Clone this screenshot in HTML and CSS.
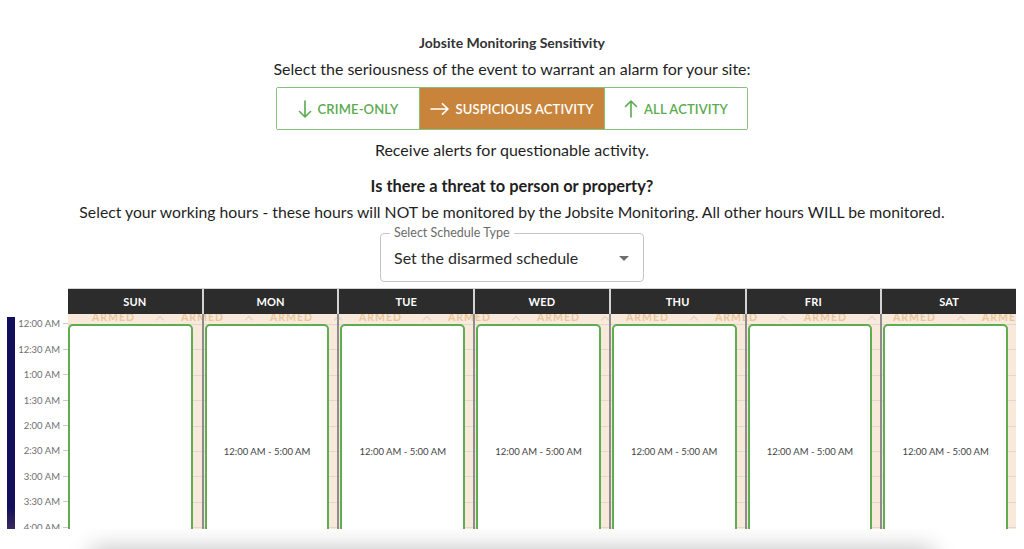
FILE: index.html
```html
<!DOCTYPE html>
<html lang="en">
<head>
<meta charset="utf-8">
<title>Jobsite Monitoring</title>
<link rel="stylesheet" href="styles.css">
</head>
<body>
<div class="page">
  <section class="sens">
    <h2 class="title">Jobsite Monitoring Sensitivity</h2>
    <p class="prompt">Select the seriousness of the event to warrant an alarm for your site:</p>
    <div class="seg">
      <button class="seg-btn seg-side">
        <svg class="ico" width="14" height="18" viewBox="0 0 14 18"><path d="M7 1V17M1.5 11.5L7 17L12.5 11.5" fill="none" stroke="currentColor" stroke-width="1.6" stroke-linecap="round" stroke-linejoin="round"/></svg>
        <span>CRIME-ONLY</span>
      </button>
      <button class="seg-btn seg-mid active">
        <svg class="ico" width="19" height="12" viewBox="0 0 19 12"><path d="M1 6H18M12.5 0.8L18 6L12.5 11.2" fill="none" stroke="currentColor" stroke-width="1.6" stroke-linecap="round" stroke-linejoin="round"/></svg>
        <span>SUSPICIOUS ACTIVITY</span>
      </button>
      <button class="seg-btn seg-side">
        <svg class="ico" width="14" height="18" viewBox="0 0 14 18"><path d="M7 17V1M1.5 6.5L7 1L12.5 6.5" fill="none" stroke="currentColor" stroke-width="1.6" stroke-linecap="round" stroke-linejoin="round"/></svg>
        <span>ALL ACTIVITY</span>
      </button>
    </div>
    <p class="desc">Receive alerts for questionable activity.</p>
    <p class="question">Is there a threat to person or property?</p>
    <p class="instr">Select your working hours - these hours will NOT be monitored by the Jobsite Monitoring. All other hours WILL be monitored.</p>
    <div class="field">
      <span class="field-label">Select Schedule Type</span>
      <span class="field-value">Set the disarmed schedule</span>
      <span class="caret"></span>
    </div>
  </section>

  <section class="cal">
    <div class="timecol">
      <div class="bar"></div>
      <div class="labels">
        <div class="tl"><span>12:00 AM</span><i></i></div>
        <div class="tl"><span>12:30 AM</span><i></i></div>
        <div class="tl"><span>1:00 AM</span><i></i></div>
        <div class="tl"><span>1:30 AM</span><i></i></div>
        <div class="tl"><span>2:00 AM</span><i></i></div>
        <div class="tl"><span>2:30 AM</span><i></i></div>
        <div class="tl"><span>3:00 AM</span><i></i></div>
        <div class="tl"><span>3:30 AM</span><i></i></div>
        <div class="tl"><span>4:00 AM</span><i></i></div>
      </div>
    </div>
    <div class="days">
      <div class="dayhead">
        <div class="dh">SUN</div>
        <div class="dh">MON</div>
        <div class="dh">TUE</div>
        <div class="dh">WED</div>
        <div class="dh">THU</div>
        <div class="dh">FRI</div>
        <div class="dh">SAT</div>
      </div>
      <div class="daybody">
        <div class="armed-strip">
          <span class="tile"><b>ARMED</b><i class="chev"></i></span>
          <span class="tile"><b>ARMED</b><i class="chev"></i></span>
          <span class="tile"><b>ARMED</b><i class="chev"></i></span>
          <span class="tile"><b>ARMED</b><i class="chev"></i></span>
          <span class="tile"><b>ARMED</b><i class="chev"></i></span>
          <span class="tile"><b>ARMED</b><i class="chev"></i></span>
          <span class="tile"><b>ARMED</b><i class="chev"></i></span>
          <span class="tile"><b>ARMED</b><i class="chev"></i></span>
          <span class="tile"><b>ARMED</b><i class="chev"></i></span>
          <span class="tile"><b>ARMED</b><i class="chev"></i></span>
          <span class="tile"><b>ARMED</b><i class="chev"></i></span>
        </div>
        <div class="cols">
          <div class="col"><div class="event"></div></div>
          <div class="col"><div class="event">12:00 AM - 5:00 AM</div></div>
          <div class="col"><div class="event">12:00 AM - 5:00 AM</div></div>
          <div class="col"><div class="event">12:00 AM - 5:00 AM</div></div>
          <div class="col"><div class="event">12:00 AM - 5:00 AM</div></div>
          <div class="col"><div class="event">12:00 AM - 5:00 AM</div></div>
          <div class="col"><div class="event">12:00 AM - 5:00 AM</div></div>
        </div>
      </div>
    </div>
  </section>

  <div class="sheet"></div>
</div>
</body>
</html>
```

FILE: styles.css
```css
* { box-sizing: border-box; }

html, body {
  margin: 0;
  padding: 0;
  background: #ffffff;
  overflow: hidden;
}

body {
  font-family: Lato, "Liberation Sans", sans-serif;
  color: #1f1f1f;
}

.sens {
  display: flex;
  flex-direction: column;
  align-items: center;
  padding-top: 35px;
}

.title {
  margin: 0;
  font-size: 14px;
  line-height: 16px;
  font-weight: 700;
  color: #333333;
}

.prompt {
  margin: 8px 0 0;
  font-size: 16px;
  line-height: 20px;
  color: #1f1f1f;
}

.seg {
  margin-top: 8px;
  display: flex;
  height: 43px;
  border: 1px solid #86c27a;
  border-radius: 2px;
}

.seg-btn {
  display: flex;
  align-items: center;
  justify-content: center;
  gap: 6px;
  height: 100%;
  padding: 0;
  border: 0;
  background: #ffffff;
  color: #5aaa4e;
  font-family: inherit;
  font-size: 13px;
  font-weight: 600;
  letter-spacing: 0.15px;
}

.seg-side { width: 142px; }
.seg-mid { width: 186px; border-left: 1px solid #86c27a; border-right: 1px solid #86c27a; }

.seg-btn.active {
  background: #c8843a;
  color: #ffffff;
}

.ico { display: block; flex: none; }

.desc {
  margin: 10px 0 0;
  font-size: 16px;
  line-height: 20px;
}

.question {
  margin: 16px 0 0;
  font-size: 16.4px;
  line-height: 20px;
  font-weight: 700;
}

.instr {
  margin: 6px 0 0;
  font-size: 15.75px;
  line-height: 20px;
}

.field {
  position: relative;
  margin-top: 11px;
  width: 264px;
  height: 49px;
  border: 1px solid #c4c4c4;
  border-radius: 4px;
  display: flex;
  align-items: center;
  padding-left: 13px;
}

.field-label {
  position: absolute;
  left: 9px;
  top: -8px;
  padding: 0 4px;
  background: #ffffff;
  font-size: 12.5px;
  line-height: 14px;
  color: #6b6b6b;
}

.field-value {
  font-size: 16px;
  color: #2a2a2a;
}

.caret {
  position: absolute;
  right: 14px;
  top: 22px;
  width: 0;
  height: 0;
  border-left: 5px solid transparent;
  border-right: 5px solid transparent;
  border-top: 5px solid #6e6e6e;
}

/* calendar */
.cal {
  margin-top: 6px;
  display: flex;
  height: 241px;
  overflow: hidden;
}

.timecol {
  width: 68px;
  flex: none;
  display: flex;
  align-items: flex-start;
}

.bar {
  margin-left: 7px;
  margin-top: 29px;
  width: 8px;
  height: 212px;
  background: linear-gradient(to bottom, #130e5b 0%, #140f5b 90%, #3b2a5c 100%);
  flex: none;
}

.labels {
  margin-top: 23.3px;
  width: 53px;
  display: flex;
  flex-direction: column;
}

.tl {
  height: 25.4px;
  display: flex;
  align-items: center;
  justify-content: flex-end;
  gap: 3px;
  font-size: 9.5px;
  color: #707070;
}

.tl i {
  display: block;
  width: 5px;
  height: 1px;
  background: #c9c9c9;
}

.days {
  flex: 1;
  margin-right: 8px;
  display: flex;
  flex-direction: column;
  min-height: 0;
}

.dayhead {
  flex: none;
  display: grid;
  grid-template-columns: repeat(7, 1fr);
  gap: 2px;
  height: 26px;
  background: #d3d3d3;
  border-top: 1px solid #d3d3d3;
}

.dh {
  background: #2c2c2c;
  color: #ffffff;
  font-size: 11px;
  font-weight: 700;
  display: flex;
  align-items: center;
  justify-content: center;
  letter-spacing: 0.2px;
}

.daybody {
  position: relative;
  flex: 1;
  min-height: 0;
  background-color: #f8e9da;
  background-image: repeating-linear-gradient(to bottom, #dcd8d3 0, #dcd8d3 1px, transparent 1px, transparent 25.4px);
  background-position: 0 10px;
}

.armed-strip {
  position: absolute;
  left: 0;
  top: 0;
  right: 0;
  height: 10px;
  overflow: hidden;
  display: flex;
  padding-left: 24px;
  white-space: nowrap;
}

.tile {
  flex: none;
  width: 89px;
  display: flex;
  align-items: flex-start;
}

.tile b {
  display: block;
  font-size: 10.5px;
  line-height: 10px;
  font-weight: 700;
  letter-spacing: 1px;
  color: #e8c59a;
  margin-top: -2px;
}

.chev {
  display: block;
  margin-left: 22px;
  margin-top: 3px;
  width: 6px;
  height: 6px;
  border-left: 1px solid #e2d0bf;
  border-top: 1px solid #e2d0bf;
  transform: rotate(45deg);
}

.cols {
  position: relative;
  display: grid;
  grid-template-columns: repeat(7, 1fr);
  gap: 2px;
  height: 100%;
}

.col {
  position: relative;
  padding-top: 10px;
}

.col + .col {
  box-shadow: -2px 0 0 #8d8d8d;
}

.event {
  width: calc(100% - 9px);
  height: 254px;
  background: #ffffff;
  border: 2px solid #5fac52;
  border-radius: 5px 5px 0 0;
  display: flex;
  align-items: center;
  justify-content: center;
  font-size: 9.5px;
  color: #444444;
}

.col + .col .event { margin-left: 1px; }

.sheet {
  margin: 22px 90px 0;
  height: 60px;
  background: #ffffff;
  border-radius: 8px;
  box-shadow: 0 -2px 24px rgba(0, 0, 0, 0.26);
}
```
